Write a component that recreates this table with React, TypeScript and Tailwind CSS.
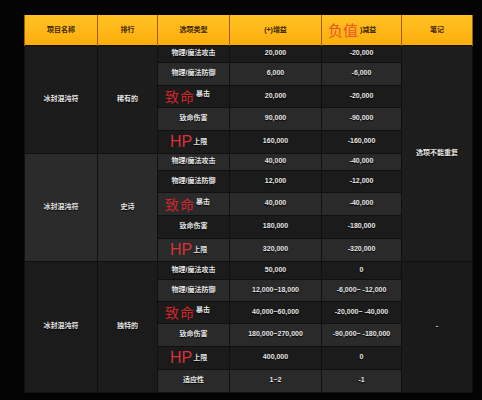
import React from "react";

type Row = { type: string; plus: string; minus: string; h: string; mark?: "crit" | "hp" };
type Group = { name: string; rank: string; bg: string; rows: Row[] };

const groups: Group[] = [
  {
    name: "冰封混沌符",
    rank: "稀有的",
    bg: "bg-[#1c1c1c]",
    rows: [
      { type: "物理/魔法攻击", plus: "20,000", minus: "-20,000", h: "h-[17px]" },
      { type: "物理/魔法防御", plus: "6,000", minus: "-6,000", h: "h-[23px]" },
      { type: "暴击", plus: "20,000", minus: "-20,000", h: "h-[22px]", mark: "crit" },
      { type: "致命伤害", plus: "90,000", minus: "-90,000", h: "h-[23px]" },
      { type: "上限", plus: "160,000", minus: "-160,000", h: "h-[23px]", mark: "hp" },
    ],
  },
  {
    name: "冰封混沌符",
    rank: "史诗",
    bg: "bg-[#2b2b2b]",
    rows: [
      { type: "物理/魔法攻击", plus: "40,000", minus: "-40,000", h: "h-[17px]" },
      { type: "物理/魔法防御", plus: "12,000", minus: "-12,000", h: "h-[22px]" },
      { type: "暴击", plus: "40,000", minus: "-40,000", h: "h-[23px]", mark: "crit" },
      { type: "致命伤害", plus: "180,000", minus: "-180,000", h: "h-[23px]" },
      { type: "上限", plus: "320,000", minus: "-320,000", h: "h-[23px]", mark: "hp" },
    ],
  },
  {
    name: "冰封混沌符",
    rank: "独特的",
    bg: "bg-[#1b1b1b]",
    rows: [
      { type: "物理/魔法攻击", plus: "50,000", minus: "0", h: "h-[18px]" },
      { type: "物理/魔法防御", plus: "12,000~18,000", minus: "-6,000~ -12,000", h: "h-[22px]" },
      { type: "暴击", plus: "40,000~60,000", minus: "-20,000~ -40,000", h: "h-[22px]", mark: "crit" },
      { type: "致命伤害", plus: "180,000~270,000", minus: "-90,000~ -180,000", h: "h-[23px]" },
      { type: "上限", plus: "400,000", minus: "0", h: "h-[23px]", mark: "hp" },
      { type: "适应性", plus: "1~2", minus: "-1", h: "h-[23px]" },
    ],
  },
];

const cell =
  "border border-[#101010] text-center align-middle text-[7px] font-bold text-[#e6e6e6] [text-shadow:0_1px_1px_#000]";
const head =
  "border-x border-[#9a5e00] text-center align-middle text-[7px] font-bold text-[#3d2500]";

function TypeCell({ r }: { r: Row }) {
  if (r.mark === "crit")
    return (
      <div className="flex items-center pl-[7px]">
        <span className="text-[14px] font-normal leading-none tracking-[1px] text-[#d0262c] [text-shadow:none] [font-family:'Noto_Sans_CJK_SC',sans-serif]">
          致命
        </span>
        <span className="ml-[1px] mt-[-3px]">{r.type}</span>
      </div>
    );
  if (r.mark === "hp")
    return (
      <div className="flex items-center pl-[12px]">
        <span className="text-[16px] font-normal leading-none text-[#d8333a] [text-shadow:none]">HP</span>
        <span className="ml-[1px] mt-[2px]">{r.type}</span>
      </div>
    );
  return <>{r.type}</>;
}

export default function App() {
  let idx = 0;
  return (
    <div className="h-[400px] w-[482px] bg-[#030303] pl-[24px] pt-[15px] antialiased [font-family:'Liberation_Sans','Noto_Sans_CJK_SC',sans-serif]">
      <table className="w-[448px] table-fixed border-collapse">
        <colgroup>
          <col className="w-[73px]" />
          <col className="w-[60px]" />
          <col className="w-[72px]" />
          <col className="w-[92px]" />
          <col className="w-[80px]" />
          <col className="w-[71px]" />
        </colgroup>
        <thead>
          <tr className="h-[30px] bg-gradient-to-b from-[#ffc223] to-[#fdad08]">
            <th className={head}>项目名称</th>
            <th className={head}>排行</th>
            <th className={head}>选项类型</th>
            <th className={head}>(+)增益</th>
            <th className={head}>
              <div className="flex items-center pl-[6px]">
                <span className="text-[15px] font-normal leading-none text-[#f0522a] [font-family:'Noto_Sans_CJK_SC',sans-serif]">
                  负值
                </span>
                <span className="ml-[2px]">)减益</span>
              </div>
            </th>
            <th className={head}>笔记</th>
          </tr>
        </thead>
        <tbody>
          {groups.map((g, gi) =>
            g.rows.map((r, ri) => {
              const light = idx++ % 2 === 1;
              const rowBg = light ? "bg-[#2a2a2a]" : "bg-[#1b1b1b]";
              return (
                <tr key={`${gi}-${ri}`} className={r.h}>
                  {ri === 0 && (
                    <>
                      <td rowSpan={g.rows.length} className={`${cell} ${g.bg}`}>
                        {g.name}
                      </td>
                      <td rowSpan={g.rows.length} className={`${cell} ${g.bg}`}>
                        {g.rank}
                      </td>
                    </>
                  )}
                  <td className={`${cell} ${rowBg}`}>
                    <TypeCell r={r} />
                  </td>
                  <td className={`${cell} ${rowBg}`}>{r.plus}</td>
                  <td className={`${cell} ${rowBg}`}>{r.minus}</td>
                  {gi === 0 && ri === 0 && (
                    <td rowSpan={10} className={`${cell} bg-[#1d1d1d]`}>
                      选项不能重复
                    </td>
                  )}
                  {gi === 2 && ri === 0 && (
                    <td rowSpan={6} className={`${cell} bg-[#1a1a1a] text-[#777]`}>
                      -
                    </td>
                  )}
                </tr>
              );
            })
          )}
        </tbody>
      </table>
    </div>
  );
}
